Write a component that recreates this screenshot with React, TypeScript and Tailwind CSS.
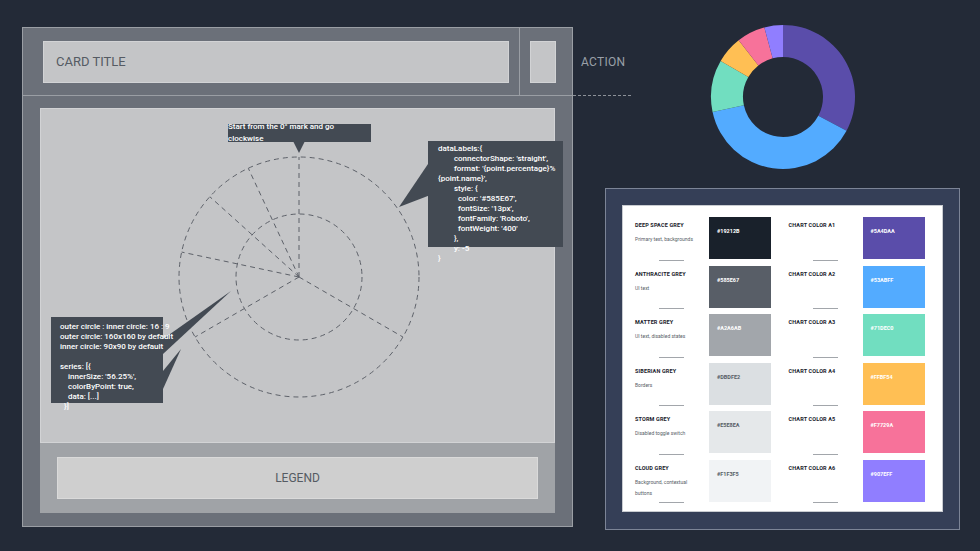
import React from 'react';

const greys = [
  { name: 'DEEP SPACE GREY', desc: 'Primary text, backgrounds', hex: '#19212B', dark: true },
  { name: 'ANTHRACITE GREY', desc: 'UI text', hex: '#585E67', dark: true },
  { name: 'MATTER GREY', desc: 'UI text, disabled states', hex: '#A2A6AB', dark: true },
  { name: 'SIBERIAN GREY', desc: 'Borders', hex: '#DBDFE2', dark: false },
  { name: 'STORM GREY', desc: 'Disabled toggle switch', hex: '#E5E8EA', dark: false },
  { name: 'CLOUD GREY', desc: 'Background, contextual buttons', hex: '#F1F3F5', dark: false },
];
const charts = ['#5A4DAA', '#53ABFF', '#71DEC0', '#FFBF54', '#F7729A', '#907EFF'];

function arc(cx: number, cy: number, r0: number, r1: number, a0: number, a1: number) {
  const p = (r: number, a: number) => {
    const t = ((a - 90) * Math.PI) / 180;
    return `${cx + r * Math.cos(t)} ${cy + r * Math.sin(t)}`;
  };
  const large = a1 - a0 > 180 ? 1 : 0;
  return `M ${p(r1, a0)} A ${r1} ${r1} 0 ${large} 1 ${p(r1, a1)} L ${p(r0, a1)} A ${r0} ${r0} 0 ${large} 0 ${p(r0, a0)} Z`;
}

function Donut() {
  const segs = [0, 118, 258, 300, 322, 345, 360];
  return (
    <svg width="150" height="150" viewBox="0 0 150 150">
      {charts.map((c, i) => (
        <path key={i} d={arc(75, 75, 40, 72, segs[i], segs[i + 1])} fill={c} />
      ))}
    </svg>
  );
}

function Diagram() {
  const cx = 258, cy = 168;
  const angles = [0, 335, 312, 282, 240, 120];
  return (
    <svg className="absolute inset-0" width="517" height="335">
      <g fill="none" stroke="#5d6169" strokeWidth="1" strokeDasharray="5 4">
        <circle cx={cx} cy={cy} r="120" />
        <circle cx={cx} cy={cy} r="63" />
        {angles.map((a) => {
          const t = ((a - 90) * Math.PI) / 180;
          return <line key={a} x1={cx} y1={cy} x2={cx + 120 * Math.cos(t)} y2={cy + 120 * Math.sin(t)} />;
        })}
      </g>
      <g fill="#434a53">
        <polygon points="252,32 264,32 258,44" />
        <polygon points="387,55 392,85 358,98" />
        <polygon points="122,230 122,245 190,182" />
        <polygon points="122,262 122,280 140,240" />
      </g>
    </svg>
  );
}

export default function App() {
  return (
    <div className="relative w-[980px] h-[551px] bg-[#232a37] overflow-hidden" style={{ fontFamily: 'Roboto, "Liberation Sans", sans-serif' }}>
      {/* card wireframe */}
      <div className="absolute left-[22px] top-[27px] w-[551px] h-[500px] bg-[#6b7079] border border-[#9a9ea4] flex flex-col">
        <div className="h-[68px] flex border-b border-[#9a9ea4]">
          <div className="flex-1 flex items-center pl-[20px] pr-[10px]">
            <div className="h-[42px] w-full bg-[#c4c5c7] border border-[#d2d3d5] flex items-center pl-[12px] text-[13px] text-[#555b63]">CARD TITLE</div>
          </div>
          <div className="w-[53px] border-l border-[#9a9ea4] flex items-center pl-[10px]">
            <div className="h-[42px] w-[26px] bg-[#c4c5c7] border border-[#d2d3d5]" />
          </div>
        </div>
        <div className="flex-1 px-[17px] pt-[12px] pb-[13px] flex flex-col">
          <div className="relative h-[335px] bg-[#c4c5c7] border border-[#d2d3d5] text-white">
            <Diagram />
            <div className="absolute left-[187px] top-[15px] w-[143px] h-[18px] bg-[#434a53] flex items-center justify-center text-[8px] font-medium">
              Start from the 0° mark and go clockwise
            </div>
            <div className="absolute left-[387px] top-[32px] w-[135px] h-[106px] bg-[#434a53] px-[10px] py-[3px] text-[8px] leading-[10px] font-medium whitespace-pre">
{`dataLabels:{
        connectorShape: 'straight',
        format: '{point.percentage}%
{point.name}',
        style: {
          color: '#585E67',
          fontSize: '13px',
          fontFamily: 'Roboto',
          fontWeight: '400'
        },
        y: -5
}`}
            </div>
            <div className="absolute left-[10px] top-[208px] w-[112px] h-[86px] bg-[#434a53] px-[9px] pt-[5px] text-[8px] leading-[10px] font-medium whitespace-pre">
{`outer circle : inner circle: 16 : 9
outer circle: 160x160 by default
inner circle: 90x90 by default

series: [{
    innerSize: '56.25%',
    colorByPoint: true,
    data: [...]
  }]`}
            </div>
          </div>
          <div className="flex-1 bg-[#a0a3a7] flex items-center px-[17px]">
            <div className="h-[42px] w-full bg-[#cfcfcf] border border-[#dadada] flex items-center justify-center text-[12px] text-[#555b63]">LEGEND</div>
          </div>
        </div>
      </div>

      <div className="absolute left-[581px] top-[53px] text-[12px] text-[#9aa0a8] tracking-wide">ACTION</div>
      <div className="absolute left-[573px] top-[95px] w-[58px] border-t border-dashed border-[#8c9198]" />

      <div className="absolute left-[708px] top-[22px]"><Donut /></div>

      {/* palette */}
      <div className="absolute left-[605px] top-[188px] w-[355px] h-[342px] bg-[#353f57] border border-[#7c8496] p-[16px]">
        <div className="bg-white w-[321px] h-[307px] border border-[#c9ccd1] grid grid-cols-2 pt-[11px] pl-[12px]">
          {[0, 1].map((col) => (
            <div key={col} className="flex flex-col">
              {greys.map((g, i) => {
                const hex = col === 0 ? g.hex : charts[i];
                const light = col === 0 && !g.dark;
                return (
                  <div key={i} className="h-[48.5px] flex">
                    <div className="w-[74px] relative pt-[4px]">
                      <div className="text-[5.5px] font-bold text-[#19212b] tracking-wide">{col === 0 ? g.name : `CHART COLOR A${i + 1}`}</div>
                      {col === 0 && <div className="text-[5px] text-[#585e67] mt-[5px] leading-[11px] w-[70px]">{g.desc}</div>}
                      <div className="absolute left-[24px] bottom-[5px] w-[25px] border-t border-[#a2a6ab]" />
                    </div>
                    <div className="w-[62px] h-[42px] pt-[10px] pl-[8px] text-[5.5px] font-bold" style={{ backgroundColor: hex, color: light ? '#585e67' : '#ffffff' }}>
                      {hex.toUpperCase()}
                    </div>
                  </div>
                );
              })}
            </div>
          ))}
        </div>
      </div>
    </div>
  );
}
